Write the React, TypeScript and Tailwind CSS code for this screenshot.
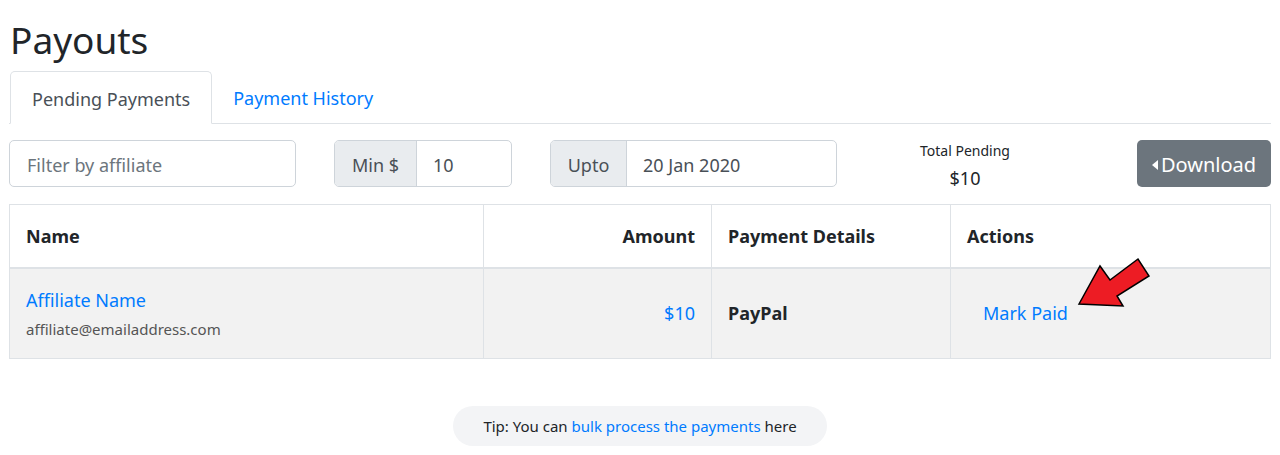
import React from "react";

const font = { fontFamily: '"Noto Sans", "Open Sans", sans-serif' };

const RedArrow: React.FC = () => (
  <svg
    width="80"
    height="58"
    viewBox="0 0 80 58"
    className="absolute left-[124px] top-[-15px]"
  >
    <polygon
      points="4,50 25,12 35,26 63,5 74,22 42,42 48,52"
      fill="#ed1c24"
      stroke="#000"
      strokeWidth="1.5"
      strokeLinejoin="miter"
    />
  </svg>
);

const App: React.FC = () => {
  return (
    <div className="bg-white min-h-[455px] px-[9px] text-[#212529]" style={font}>
      <h1 className="pt-[17px] text-[37px] leading-[46px] pl-[1px] mb-[8px]">Payouts</h1>

      <div className="flex border-b border-[#dee2e6] pl-[1px]">
        <div className="-mb-px h-[53px] pt-[3px] px-[21px] flex items-center border border-[#dee2e6] border-b-white rounded-t-[5px] bg-white text-[18px] text-[#495057]">
          Pending Payments
        </div>
        <a href="#" className="h-[52px] pt-[3px] px-[21px] flex items-center text-[18px] text-[#007bff]">
          Payment History
        </a>
      </div>

      <div className="flex items-center mt-[16px] h-[47px]">
        <div className="w-[287px] h-full pt-[3px] border border-[#ced4da] rounded-[5px] flex items-center px-[17px] text-[18px] text-[#6c757d]">
          Filter by affiliate
        </div>
        <div className="ml-[38px] w-[178px] h-full flex border border-[#ced4da] rounded-[5px] overflow-hidden text-[18px]">
          <div className="w-[82px] pt-[3px] bg-[#e9ecef] border-r border-[#ced4da] flex items-center justify-center text-[#495057]">
            Min $
          </div>
          <div className="flex-1 pt-[3px] flex items-center px-[16px] text-[#495057]">10</div>
        </div>
        <div className="ml-[38px] w-[287px] h-full flex border border-[#ced4da] rounded-[5px] overflow-hidden text-[18px]">
          <div className="w-[76px] pt-[3px] bg-[#e9ecef] border-r border-[#ced4da] flex items-center justify-center text-[#495057]">
            Upto
          </div>
          <div className="flex-1 pt-[3px] flex items-center px-[16px] text-[#495057]">20 Jan 2020</div>
        </div>
        <div className="flex-1 flex flex-col items-center justify-center pr-[44px] pt-[6px]">
          <div className="text-[14px] leading-[20px]">Total Pending</div>
          <div className="text-[18px] leading-[28px] mt-[3px]">$10</div>
        </div>
        <button className="w-[134px] h-full pt-[2px] bg-[#6c757d] text-white rounded-[5px] flex items-center justify-center text-[20px]">
          <svg width="6" height="10" viewBox="0 0 6 10" className="mr-[3px]">
            <polygon points="6,0 0,5 6,10" fill="#fff" />
          </svg>
          Download
        </button>
      </div>

      <table className="mt-[17px] w-full border-collapse border border-[#dee2e6] text-[18px]">
        <thead>
          <tr className="h-[63px]">
            <th className="w-[474px] pt-[2px] border border-[#dee2e6] border-b-2 text-left font-bold px-[16px]">Name</th>
            <th className="w-[228px] pt-[2px] border border-[#dee2e6] border-b-2 text-right font-bold px-[16px]">Amount</th>
            <th className="w-[239px] pt-[2px] border border-[#dee2e6] border-b-2 text-left font-bold px-[16px]">Payment Details</th>
            <th className="pt-[2px] border border-[#dee2e6] border-b-2 text-left font-bold px-[16px]">Actions</th>
          </tr>
        </thead>
        <tbody>
          <tr className="h-[91px] bg-[#f2f2f2]">
            <td className="border border-[#dee2e6] px-[16px]">
              <a href="#" className="block text-[#007bff] leading-[26px]">Affiliate Name</a>
              <div className="text-[15px] text-[#555] mt-[5px] leading-[22px]">affiliate@emailaddress.com</div>
            </td>
            <td className="border border-[#dee2e6] px-[16px] text-right text-[#007bff]">$10</td>
            <td className="border border-[#dee2e6] px-[16px] font-bold">PayPal</td>
            <td className="border border-[#dee2e6] px-[16px] relative">
              <a href="#" className="ml-[16px] text-[#007bff]">Mark Paid</a>
              <RedArrow />
            </td>
          </tr>
        </tbody>
      </table>

      <div className="flex justify-center mt-[47px]">
        <div className="h-[40px] px-[30px] rounded-full bg-[#f3f4f6] flex items-center text-[15px]">
          Tip: You can&nbsp;<a href="#" className="text-[#007bff]">bulk process the payments</a>&nbsp;here
        </div>
      </div>
    </div>
  );
};

export default App;
